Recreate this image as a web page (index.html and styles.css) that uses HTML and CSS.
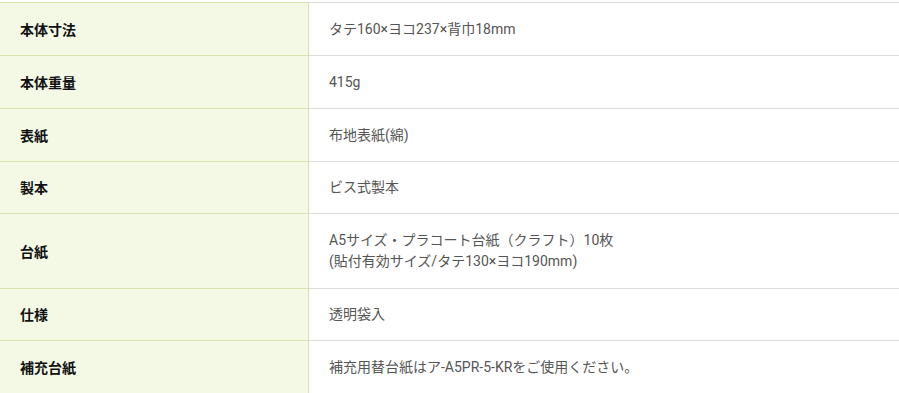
FILE: index.html
```html
<!DOCTYPE html>
<html lang="ja">
<head>
<meta charset="utf-8">
<link rel="stylesheet" href="styles.css">
</head>
<body>
<table class="spec">
  <tbody>
    <tr><th>本体寸法</th><td>タテ160×ヨコ237×背巾18mm</td></tr>
    <tr><th>本体重量</th><td>415g</td></tr>
    <tr><th>表紙</th><td>布地表紙(綿)</td></tr>
    <tr class="short"><th>製本</th><td>ビス式製本</td></tr>
    <tr class="tall"><th>台紙</th><td>A5サイズ・プラコート台紙（クラフト）10枚<br>(貼付有効サイズ/タテ130×ヨコ190mm)</td></tr>
    <tr class="short"><th>仕様</th><td>透明袋入</td></tr>
    <tr><th>補充台紙</th><td>補充用替台紙はア-A5PR-5-KRをご使用ください。</td></tr>
  </tbody>
</table>
</body>
</html>
```

FILE: styles.css
```css
html, body {
  margin: 0;
  padding: 0;
  background: #ffffff;
}
body {
  padding-top: 2px;
  font-family: Roboto, "Noto Sans CJK JP", sans-serif;
}
.spec {
  width: 100%;
  border-collapse: collapse;
  table-layout: fixed;
}
.spec tr {
  height: 53px;
}
.spec tr.short {
  height: 52px;
}
.spec tr.tall {
  height: 75px;
}
.spec th,
.spec td {
  font-size: 14px;
  line-height: 21px;
  padding: 0 0 0 20px;
  text-align: left;
  vertical-align: middle;
}
.spec th {
  width: 288px;
  background: #f4f9e6;
  color: #111;
  font-weight: 700;
  font-family: "Noto Sans CJK JP", sans-serif;
  border-top: 1px solid #d7e4b0;
  border-right: 1px solid #d7e4b0;
}
.spec td {
  color: #555;
  font-weight: 400;
  border-top: 1px solid #dcdcdc;
  background: #fff;
}
```
